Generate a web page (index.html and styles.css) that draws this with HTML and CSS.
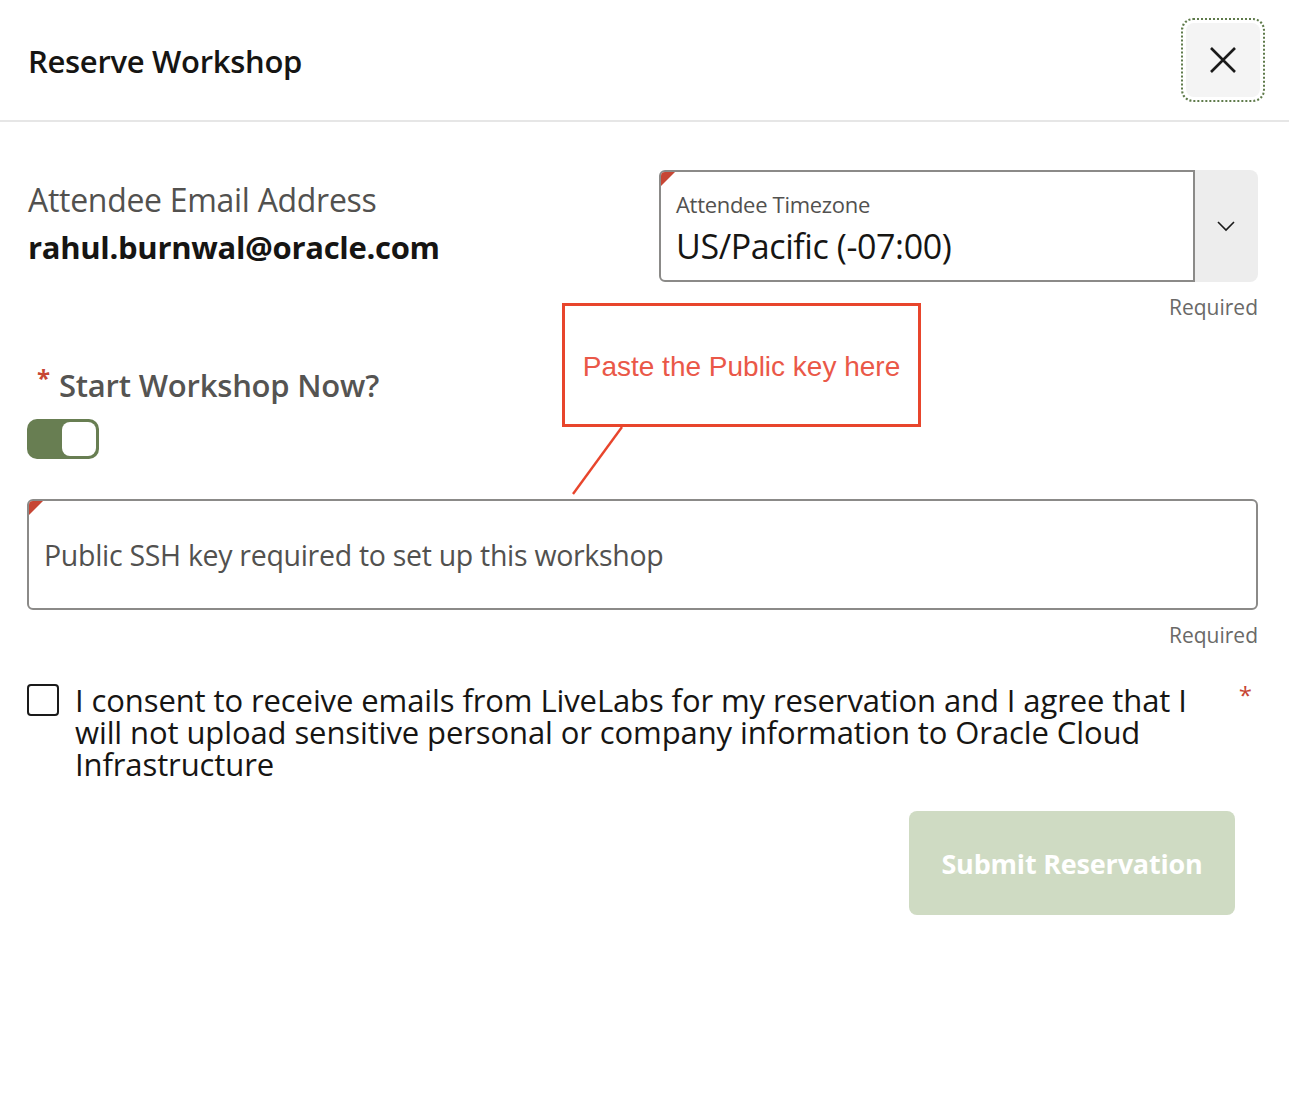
FILE: index.html
```html
<!DOCTYPE html>
<html lang="en">
<head>
<meta charset="utf-8">
<title>Reserve Workshop</title>
<link rel="stylesheet" href="styles.css">
</head>
<body>
<div class="dialog">
  <header class="header">
    <h1 class="title">Reserve Workshop</h1>
    <button class="close" aria-label="Close">
      <span class="close-inner">
        <svg width="28" height="28" viewBox="0 0 28 28"><path d="M2 2 L26 26 M26 2 L2 26" stroke="#1a1a1a" stroke-width="2.6" fill="none"/></svg>
      </span>
    </button>
  </header>

  <main class="body">
    <section class="row-top">
      <div class="email">
        <div class="email-label">Attendee Email Address</div>
        <div class="email-value">rahul.burnwal@oracle.com</div>
      </div>
      <div class="tz">
        <div class="select">
          <div class="select-field">
            <span class="corner"></span>
            <div class="select-label">Attendee Timezone</div>
            <div class="select-value">US/Pacific (-07:00)</div>
          </div>
          <div class="select-btn">
            <svg width="20" height="12" viewBox="0 0 20 12"><path d="M2 2 L10 10 L18 2" stroke="#1a1a1a" stroke-width="1.6" fill="none"/></svg>
          </div>
        </div>
        <div class="required">Required</div>
      </div>
    </section>

    <section class="row-start">
      <div class="start-label"><span class="star">*</span>Start Workshop Now?</div>
      <div class="toggle"><span class="knob"></span></div>
      <div class="callout">
        <span class="callout-text">Paste the Public key here</span>
      </div>
      <svg class="callout-line" width="60" height="72" viewBox="0 0 60 72"><path d="M51 1 L2 68" stroke="#e8452c" stroke-width="2.4" fill="none"/></svg>
    </section>

    <section class="ssh">
      <div class="ssh-field">
        <span class="corner"></span>
        <span class="ssh-placeholder">Public SSH key required to set up this workshop</span>
      </div>
      <div class="required">Required</div>
    </section>

    <section class="consent">
      <span class="checkbox"></span>
      <p class="consent-text">I consent to receive emails from LiveLabs for my reservation and I agree that I will not upload sensitive personal or company information to Oracle Cloud Infrastructure</p>
      <span class="consent-star">*</span>
    </section>

    <div class="actions">
      <button class="submit">Submit Reservation</button>
    </div>
  </main>
</div>
</body>
</html>
```

FILE: styles.css
```css
* { box-sizing: border-box; }
html, body { margin: 0; padding: 0; background: #fff; }
body {
  font-family: "Open Sans", "Noto Sans", sans-serif;
  color: #161513;
  width: 1289px;
}
.header {
  height: 122px;
  border-bottom: 2px solid #e6e6e6;
  display: flex;
  align-items: center;
  justify-content: space-between;
  padding: 0 24px 0 28px;
}
.title {
  margin: 0;
  font-size: 31px;
  font-weight: 600;
  letter-spacing: -0.3px;
  color: #161513;
  position: relative;
  top: 1px;
}
.close {
  width: 84px;
  height: 84px;
  border: 2px dotted #5e7a4a;
  border-radius: 12px;
  background: #fff;
  padding: 3px;
  margin-top: -1px;
  cursor: pointer;
}
.close-inner {
  display: flex;
  width: 100%;
  height: 100%;
  align-items: center;
  justify-content: center;
  background: #f4f4f4;
  border-radius: 8px;
}
.body {
  padding: 0 31px 0 27px;
}
.row-top {
  display: flex;
  justify-content: space-between;
  margin-top: 48px;
}
.email { padding-top: 8px; padding-left: 1px; }
.email-label {
  font-size: 32px;
  font-weight: 500;
  color: #52514f;
  line-height: 44px;
  letter-spacing: -0.3px;
}
.email-value {
  font-size: 31px;
  font-weight: 700;
  color: #161513;
  line-height: 50px;
  letter-spacing: -0.3px;
}
.tz { width: 599px; }
.select {
  display: flex;
  height: 112px;
}
.select-field {
  position: relative;
  flex: 1;
  border: 2px solid #8b8a88;
  border-radius: 6px 0 0 6px;
  padding: 17px 16px 0 15px;
  overflow: hidden;
}
.corner {
  position: absolute;
  left: 0;
  top: 0;
  width: 0;
  height: 0;
  border-top: 14px solid #c74634;
  border-right: 14px solid transparent;
}
.select-label {
  font-size: 22px;
  font-weight: 500;
  color: #52514f;
  line-height: 30px;
  letter-spacing: -0.3px;
}
.select-value {
  font-size: 34px;
  color: #161513;
  line-height: 54px;
  letter-spacing: -0.4px;
}
.select-btn {
  width: 63px;
  background: #ededed;
  border-radius: 0 8px 8px 0;
  display: flex;
  align-items: center;
  justify-content: center;
  padding-right: 2px;
}
.required {
  text-align: right;
  font-size: 21px;
  color: #6a6967;
  line-height: 28px;
  margin-top: 11px;
}
.row-start {
  position: relative;
  padding-top: 44px;
  height: 178px;
}
.start-label {
  font-size: 31px;
  font-weight: 600;
  color: #555452;
  line-height: 40px;
  padding-left: 10px;
  letter-spacing: -0.2px;
}
.star {
  color: #c74634;
  font-size: 24px;
  font-weight: 700;
  vertical-align: top;
  position: relative;
  top: -7px;
  margin-right: 9px;
}
.toggle {
  margin-top: 14px;
  width: 72px;
  height: 40px;
  background: #687e52;
  border-radius: 10px;
  position: relative;
}
.knob {
  position: absolute;
  right: 3px;
  top: 3px;
  width: 34px;
  height: 34px;
  background: #fff;
  border-radius: 8px;
}
.callout {
  position: absolute;
  left: 535px;
  top: -18px;
  width: 359px;
  height: 124px;
  border: 3px solid #e8452c;
  display: flex;
  align-items: center;
  justify-content: center;
  padding-top: 4px;
}
.callout-text {
  font-family: "Liberation Sans", Arial, sans-serif;
  font-size: 28px;
  color: #ea5848;
}
.callout-line {
  position: absolute;
  left: 544px;
  top: 105px;
}
.ssh-field {
  position: relative;
  height: 111px;
  border: 2px solid #8b8a88;
  border-radius: 6px;
  display: flex;
  align-items: center;
  padding-left: 15px;
  overflow: hidden;
}
.ssh-placeholder {
  font-size: 28.5px;
  font-weight: 500;
  color: #52514f;
  letter-spacing: -0.3px;
}
.ssh .required { margin-top: 11px; }
.consent {
  display: flex;
  align-items: flex-start;
  margin-top: 35px;
  position: relative;
}
.checkbox {
  flex: none;
  width: 32px;
  height: 32px;
  border: 2px solid #1a1a1a;
  border-radius: 4px;
  margin-top: 0;
}
.consent-text {
  margin: 0 0 0 16px;
  width: 1140px;
  font-size: 31px;
  line-height: 32px;
  color: #161513;
  letter-spacing: -0.1px;
}
.consent-star {
  position: absolute;
  right: 6px;
  top: -6px;
  color: #c74634;
  font-size: 24px;
}
.actions {
  display: flex;
  justify-content: flex-end;
  padding-right: 23px;
  margin-top: 31px;
}
.submit {
  width: 326px;
  height: 104px;
  border: none;
  border-radius: 8px;
  background: #cfdbc3;
  color: #fff;
  font-family: "Open Sans", "Noto Sans", sans-serif;
  font-size: 27px;
  font-weight: 700;
  letter-spacing: -0.2px;
}
```
